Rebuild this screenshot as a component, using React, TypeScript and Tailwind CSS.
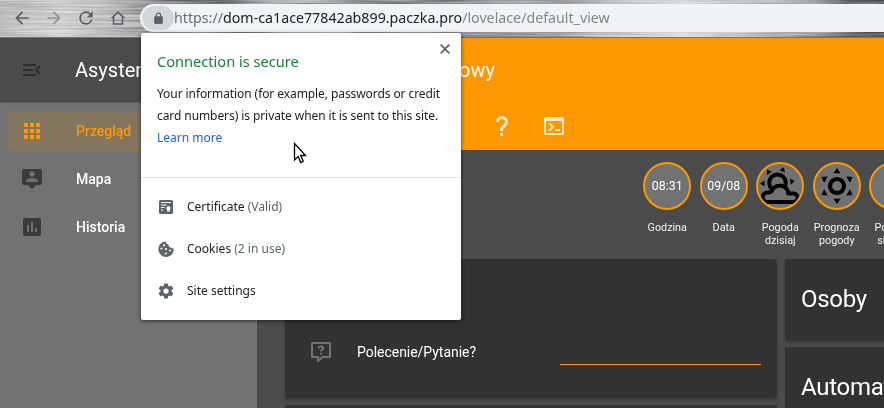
import type { CSSProperties, ReactNode } from "react";

type IconProps = { d: string; className?: string; size?: number };

function Icon({ d, className = "", size = 24 }: IconProps) {
  return (
    <svg viewBox="0 0 24 24" width={size} height={size} className={`block shrink-0 fill-current ${className}`} fillRule="evenodd">
      <path d={d} />
    </svg>
  );
}

const paths = {
  back: "M20 11H7.83l5.59-5.59L12 4l-8 8 8 8 1.41-1.41L7.83 13H20z",
  forward: "M12 4l-1.41 1.41L16.17 11H4v2h12.17l-5.58 5.59L12 20l8-8z",
  reload:
    "M17.65 6.35A7.96 7.96 0 0 0 12 4a8 8 0 1 0 7.73 10h-2.08A6 6 0 1 1 12 6c1.66 0 3.14.69 4.22 1.78L13 11h7V4z",
  home: "M12 3L2 12h3v9h14v-9h3zM12 5.7l5 4.5V19H7v-8.8z",
  lock: "M18 8h-1V6A5 5 0 0 0 7 6v2H6a2 2 0 0 0-2 2v10a2 2 0 0 0 2 2h12a2 2 0 0 0 2-2V10a2 2 0 0 0-2-2zM9 8V6a3 3 0 0 1 6 0v2z",
  menuOpen:
    "M21,15.61L19.59,17L14.58,12L19.59,7L21,8.39L17.44,12L21,15.61M3,6H16V8H3V6M3,13V11H13V13H3M3,18V16H16V18H3Z",
  apps: "M4,4H8V8H4ZM10,4H14V8H10ZM16,4H20V8H16ZM4,10H8V14H4ZM10,10H14V14H10ZM16,10H20V14H16ZM4,16H8V20H4ZM10,16H14V20H10ZM16,16H20V20H16Z",
  map: "M20,2H4A2,2 0 0,0 2,4V16A2,2 0 0,0 4,18H8L12,22L16,18H20A2,2 0 0,0 22,16V4A2,2 0 0,0 20,2M12,4.3C13.5,4.3 14.7,5.5 14.7,7C14.7,8.5 13.5,9.7 12,9.7C10.5,9.7 9.3,8.5 9.3,7C9.3,5.5 10.5,4.3 12,4.3M18,15H6V14.1C6,12.1 10,11 12,11C14,11 18,12.1 18,14.1V15Z",
  chart: "M9,17H7V10H9V17M13,17H11V7H13V17M17,17H15V13H17V17M19,3H5C3.89,3 3,3.89 3,5V19A2,2 0 0,0 5,21H19A2,2 0 0,0 21,19V5C21,3.89 20.1,3 19,3Z",
  help: "M10,19H13V22H10V19M12,2C17.35,2.22 19.68,7.62 16.5,11.67C15.67,12.67 14.33,13.33 13.67,14.17C13,15 13,16 13,17H10C10,15.33 10,13.92 10.67,12.92C11.33,11.92 12.67,11.33 13.5,10.67C15.92,8.43 15.32,5.26 12,5A3,3 0 0,0 9,8H6A6,6 0 0,1 12,2Z",
  console:
    "M20,19V7H4V19H20M20,3A2,2 0 0,1 22,5V19A2,2 0 0,1 20,21H4A2,2 0 0,1 2,19V5C2,3.89 2.9,3 4,3H20M13,17V15H18V17H13M9.58,13L5.57,9H8.4L11.7,12.3C12.09,12.69 12.09,13.33 11.7,13.72L8.42,17H5.59L9.58,13Z",
  close: "M19 6.41L17.59 5 12 10.59 6.41 5 5 6.41 10.59 12 5 17.59 6.41 19 12 13.41 17.59 19 19 17.59 13.41 12z",
  gear: "M19.43 12.98c.04-.32.07-.64.07-.98s-.03-.66-.07-.98l2.11-1.65c.19-.15.24-.42.12-.64l-2-3.46c-.12-.22-.39-.3-.61-.22l-2.49 1c-.52-.4-1.08-.73-1.69-.98l-.38-2.65A.49.49 0 0 0 14 2h-4c-.25 0-.46.18-.49.42l-.38 2.65c-.61.25-1.17.59-1.69.98l-2.49-1c-.23-.09-.49 0-.61.22l-2 3.46c-.13.22-.07.49.12.64l2.11 1.65c-.04.32-.07.65-.07.98s.03.66.07.98l-2.11 1.65c-.19.15-.24.42-.12.64l2 3.46c.12.22.39.3.61.22l2.49-1c.52.4 1.08.73 1.69.98l.38 2.65c.03.24.24.42.49.42h4c.25 0 .46-.18.49-.42l.38-2.65c.61-.25 1.17-.59 1.69-.98l2.49 1c.23.09.49 0 .61-.22l2-3.46c.12-.22.07-.49-.12-.64zM12 15.5a3.5 3.5 0 1 1 0-7 3.5 3.5 0 0 1 0 7z",
};

const metal: CSSProperties = {
  backgroundImage:
    "linear-gradient(90deg,#bdbdbd 0px,#d0d0d0 60px,#c0c0c0 105px,#8e8e8e 170px,#858585 230px,#a8a8a8 330px,#8a8a8a 430px,#9a9a9a 500px,#a9a9a9 570px,#dedede 680px,#c8c8c8 740px,#9a9a9a 800px,#747474 850px,#707070 884px)",
};

function Toolbar() {
  return (
    <header className="relative flex h-[38px] items-start border-b border-[#70737a]" style={metal}>
      <svg className="absolute inset-0 opacity-35 mix-blend-overlay" width="884" height="37">
        <filter id="brushed" colorInterpolationFilters="sRGB">
          <feTurbulence type="fractalNoise" baseFrequency="0.012 0.6" numOctaves="3" seed="4" />
          <feColorMatrix type="matrix" values="2 0 0 0 -0.5 2 0 0 0 -0.5 2 0 0 0 -0.5 0 0 0 0 1" />
        </filter>
        <rect width="884" height="37" filter="url(#brushed)" />
      </svg>
      <div className="relative flex w-[140px] items-center gap-[13px] pt-2 pl-3 text-[#5a5c60]">
        <Icon d={paths.back} size={20} />
        <Icon d={paths.forward} size={20} className="-ml-px text-[#929292]" />
        <Icon d={paths.reload} size={20} className="-ml-px" />
        <Icon d={paths.home} size={18} />
      </div>
      <div className="relative mt-1 flex h-7 flex-1 items-center rounded-l-full bg-[#f1f3f4] pl-[2px]">
        <div className="flex h-6 w-8 items-center justify-center rounded-full bg-[#d4d7d8] text-[#5f6368]">
          <Icon d={paths.lock} size={13} />
        </div>
        <span className="-mt-px whitespace-nowrap text-[14.23px] text-[#80868b]">
          <span className="text-[#6a6e73]">https://</span>
          <span className="text-[#202124]">dom-ca1ace77842ab899.paczka.pro</span>/lovelace/default_view
        </span>
      </div>
    </header>
  );
}

function NavItem({ d, label, active = false }: { d: string; label: string; active?: boolean }) {
  return (
    <a className={`mx-2 flex h-10 items-center rounded-[4px] pl-3 ${active ? "bg-[#84755f] text-[#ff9800]" : "text-white"}`}>
      <Icon d={d} className={active ? "" : "text-[#3b3b3b]"} />
      <span className="ml-8 text-[14px] font-medium">{label}</span>
    </a>
  );
}

function Sidebar() {
  return (
    <aside className="flex w-[257px] shrink-0 flex-col bg-[#727272]">
      <div className="flex h-[65px] shrink-0 items-center border-b border-[#5a5a5a] bg-[#4b4b4b] pl-5">
        <Icon d={paths.menuOpen} className="text-[#2c2c2c]" />
        <span className="ml-[31px] whitespace-nowrap text-[20px] text-white">Asystent</span>
      </div>
      <nav className="flex flex-col gap-2 pt-2">
        <NavItem d={paths.apps} label="Przegląd" active />
        <NavItem d={paths.map} label="Mapa" />
        <NavItem d={paths.chart} label="Historia" />
      </nav>
    </aside>
  );
}

function Badge({ label, children }: { label: string; children: ReactNode }) {
  return (
    <div className="flex w-[48.5px] shrink-0 flex-col items-center">
      <div className="flex h-12 w-12 items-center justify-center overflow-hidden rounded-full border-2 border-[#ff9800] bg-[#727272] text-[12.4px] text-white">
        {children}
      </div>
      <span className="mt-[11px] text-center text-[10.8px] leading-[13px] text-[#f4f4f4]">{label}</span>
    </div>
  );
}

function PartlyCloudy() {
  return (
    <svg width="44" height="44" viewBox="0 0 44 44" className="shrink-0">
      <g fill="none" stroke="#000" strokeWidth="4">
        <circle cx="19.5" cy="18.8" r="8.3" />
        <path
          d="M9.500 38A4.800 4.800 0 0 1 9.500 28.400Q13 28.500 13.800 27A8.600 8.600 0 0 1 30.300 29.300Q32.500 29.500 35.500 29.500A4.250 4.250 0 0 1 35.500 38Z"
          fill="#727272"
        />
      </g>
      {[-38, 21, -90, 82].map((a) => (
        <path key={a} d="M-3 -13L0 -17.400L3 -13Z" transform={`translate(19.5 19.5) rotate(${a})`} />
      ))}
    </svg>
  );
}

function Sunny() {
  return (
    <svg width="44" height="44" viewBox="-22 -22 44 44" className="shrink-0">
      <circle r="7" fill="none" stroke="#000" strokeWidth="4.200" />
      {[0, 60, 120, 180, 240, 300].map((a) => (
        <path key={a} d="M-3.500 -12.800L0 -18L3.500 -12.800Z" transform={`rotate(${a})`} />
      ))}
    </svg>
  );
}

function Main() {
  return (
    <main className="flex min-w-0 flex-1 flex-col bg-[#4b4b4b]">
      <div className="h-28 shrink-0 bg-[#ff9800] text-white">
        <div className="flex h-16 items-center pl-[202px] text-[20px]">owy</div>
        <div className="flex h-12 items-center gap-7 pl-[233px] text-[#ffe9c8]">
          <Icon d={paths.help} />
          <Icon d={paths.console} />
        </div>
      </div>
      <div className="flex h-[109px] shrink-0 gap-2 overflow-hidden pt-3 pl-[386px]">
        <Badge label="Godzina">08:31</Badge>
        <Badge label="Data">09/08</Badge>
        <Badge label="Pogoda dzisiaj"><PartlyCloudy /></Badge>
        <Badge label="Prognoza pogody"><Sunny /></Badge>
        <Badge label="Pozycja słońca"><span className="w-[18px]">—</span></Badge>
      </div>
      <div className="flex flex-1 gap-2 overflow-hidden pl-[28px]">
        <div className="flex w-[492px] shrink-0 flex-col gap-[7px]">
          <section className="flex h-[139px] shrink-0 flex-col justify-end rounded-[2px] bg-[#323232] pr-4 pb-[26px] pl-6 shadow-[0_2px_3px_rgba(0,0,0,0.25)]">
            <div className="flex h-10 items-center">
              <svg width="24" height="24" viewBox="0 0 24 24" className="shrink-0 fill-none stroke-[#727272] stroke-2">
                <path d="M3 3H21V17H13.500L9 21V17H3Z" strokeLinejoin="round" />
                <path d="M9.800 8.200C9.800 5.800 14.200 5.800 14.200 8.200C14.200 9.700 12 9.600 12 11.500M12 12.800V14.600" />
              </svg>
              <span className="ml-6 text-[14px] tracking-[-0.03px] text-white">Polecenie/Pytanie?</span>
              <div className="ml-auto h-[26px] w-[201px] border-b border-[#ff9800]" />
            </div>
          </section>
          <section className="flex-1 bg-[#323232]" />
        </div>
        <div className="flex flex-1 flex-col gap-[7px] text-[24px] tracking-[-0.29px] text-white">
          <section className="flex h-[81px] shrink-0 items-center bg-[#323232] pb-0.5 pl-4 shadow-[0_2px_3px_rgba(0,0,0,0.25)]">Osoby</section>
          <section className="flex h-[81px] shrink-0 items-center bg-[#323232] pb-0.5 pl-4">Automatyka</section>
        </div>
      </div>
    </main>
  );
}

function CertificateIcon() {
  return (
    <svg width="16" height="16" viewBox="0 0 16 16">
      <rect x="1" y="1" width="14" height="14" rx="1.500" fill="#5f6368" />
      <path d="M3 3.500H13M3 6H8.500M3 8.500H6.500M3 11H5" stroke="#fff" strokeWidth="1" />
      <path d="M10.500 7.300a2 2 0 0 1 1.200 3.600V13l-1.200-.8L9.300 13v-2.100A2 2 0 0 1 10.500 7.300z" fill="#fff" />
    </svg>
  );
}

function CookieIcon() {
  return (
    <svg width="16" height="16" viewBox="0 0 16 16">
      <path d="M8 .5a2.600 2.600 0 0 0 2.500 3a2.600 2.600 0 0 0 2.500 3a2.500 2.500 0 0 0 2.700 1A7.700 7.700 0 1 1 8 .5z" fill="#5f6368" />
      <g fill="#fff">
        <circle cx="6" cy="4.300" r="1.100" />
        <circle cx="3.500" cy="7.500" r="1.100" />
        <circle cx="8" cy="8" r="1.100" />
        <circle cx="12" cy="9.500" r="1.100" />
        <circle cx="7.800" cy="12.500" r="1.100" />
      </g>
    </svg>
  );
}

function PopupRow({ icon, label, note }: { icon: ReactNode; label: string; note?: string }) {
  return (
    <div className="flex h-[42px] items-center gap-[13px] pl-[17px] text-[12px] text-[#202124]">
      {icon}
      <span>
        {label} {note && <span className="text-[#5f6368]">{note}</span>}
      </span>
    </div>
  );
}

function SecurityPopup() {
  return (
    <div className="absolute top-[33px] left-[141px] flex h-[287px] w-80 flex-col rounded-[2px] bg-white shadow-[0_1px_4px_rgba(0,0,0,0.6)]">
      <div className="relative h-[145px] shrink-0 border-b border-[#e3e4e6] pt-4 pl-4">
        <Icon d={paths.close} size={16} className="absolute top-2 right-2 stroke-[#5f6368] stroke-[0.8] text-[#5f6368]" />
        <h1 className="text-[14.6px] leading-6 text-[#188038]">Connection is secure</h1>
        <p className="mt-[10px] text-[12px] leading-[22px] tracking-[-0.08px] whitespace-nowrap text-[#202124]">
          Your information (for example, passwords or credit
          <br />
          card numbers) is private when it is sent to this site.
          <br />
          <a className="tracking-normal text-[#1a62d6]">Learn more</a>
        </p>
      </div>
      <div className="pt-2">
        <PopupRow icon={<CertificateIcon />} label="Certificate" note="(Valid)" />
        <PopupRow icon={<CookieIcon />} label="Cookies" note="(2 in use)" />
        <PopupRow icon={<Icon d={paths.gear} size={18} className="-mx-px text-[#5f6368]" />} label="Site settings" />
      </div>
      <svg className="absolute top-[109px] left-[152px]" width="16" height="24" viewBox="0 0 16 24">
        <path d="M1.500 1.500V18L5.200 14.500L7.800 20.500L10.200 19.300L7.700 13.500H12.500Z" fill="#fff" stroke="#000" strokeWidth="1.300" />
      </svg>
    </div>
  );
}

export default function App() {
  return (
    <div className="relative flex h-[408px] w-[884px] flex-col overflow-hidden font-['Noto_Sans',sans-serif]">
      <Toolbar />
      <div className="flex min-h-0 flex-1 font-['Roboto',sans-serif]">
        <Sidebar />
        <Main />
      </div>
      <SecurityPopup />
    </div>
  );
}
